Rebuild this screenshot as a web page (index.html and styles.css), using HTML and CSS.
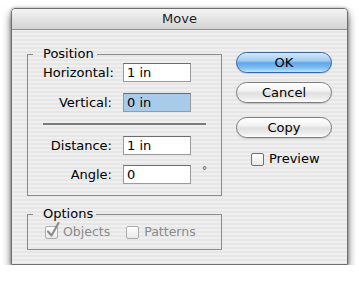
FILE: index.html
```html
<!DOCTYPE html>
<html>
<head>
<meta charset="utf-8">
<link rel="stylesheet" href="styles.css">
</head>
<body>
<div class="window">
  <div class="titlebar">Move</div>
  <div class="content">
    <div class="left">
      <fieldset class="group position">
        <legend>Position</legend>
        <div class="fields first">
          <label class="lbl">Horizontal:</label>
          <input class="field" type="text" value="1 in">
          <span></span>
          <label class="lbl">Vertical:</label>
          <input class="field selected" type="text" value="0 in">
          <span></span>
        </div>
        <hr class="sep">
        <div class="fields second">
          <label class="lbl">Distance:</label>
          <input class="field" type="text" value="1 in">
          <span></span>
          <label class="lbl">Angle:</label>
          <input class="field" type="text" value="0">
          <span class="deg">°</span>
        </div>
      </fieldset>
      <fieldset class="group options">
        <legend>Options</legend>
        <div class="checks">
          <div class="check disabled">
            <span class="box"><svg class="mark" width="14" height="16" viewBox="0 0 14 16"><path d="M2 9.5 L5.5 13.5 L12.5 1" fill="none" stroke="#8d8d8d" stroke-width="2.2" stroke-linecap="round" stroke-linejoin="round"/></svg></span>
            <span>Objects</span>
          </div>
          <div class="check disabled patterns">
            <span class="box"></span>
            <span>Patterns</span>
          </div>
        </div>
      </fieldset>
    </div>
    <div class="right">
      <button class="btn default">OK</button>
      <button class="btn cancel">Cancel</button>
      <button class="btn copy">Copy</button>
      <div class="check preview">
        <span class="box"></span>
        <span>Preview</span>
      </div>
    </div>
  </div>
</div>
</body>
</html>
```
FILE: styles.css
```css
html, body {
  margin: 0;
  padding: 0;
  background: #ffffff;
}
body {
  font-family: "DejaVu Sans", "Liberation Sans", sans-serif;
  font-size: 13px;
  color: #000;
  padding: 8px 0 0 11px;
}
.window {
  width: 337px;
  height: 257px;
  box-sizing: border-box;
  border: 1px solid #6e6e6e;
  border-radius: 4px 4px 0 0;
  background: repeating-linear-gradient(to bottom, #efefef 0, #efefef 2px, #e6e6e6 2px, #e6e6e6 4px);
  box-shadow: 0 5px 9px rgba(0, 0, 0, 0.6), 0 0 3px rgba(0, 0, 0, 0.35);
  overflow: hidden;
}
.titlebar {
  height: 20px;
  line-height: 20px;
  text-align: center;
  color: #222;
  font-size: 13px;
  border-bottom: 1px solid #8e8e8e;
  background: linear-gradient(to bottom, #f4f4f4 0%, #e4e4e4 50%, #d4d4d4 100%);
  border-radius: 3px 3px 0 0;
}
.content {
  display: flex;
  padding: 0 15px;
}
.left {
  width: 195px;
}
.group {
  box-sizing: border-box;
  width: 195px;
  min-width: 0;
  margin: 0;
  border: 1px solid #8a8a8a;
  padding: 1px 15px 11px 15px;
}
.group legend {
  line-height: 16px;
  height: 16px;
  padding: 0 3px 0 10px;
  margin-left: -10px;
  font-size: 13px;
}
.position {
  margin-top: 16px;
}
.options {
  margin-top: 10px;
  padding-top: 2px;
  padding-bottom: 9px;
}
.fields {
  display: grid;
  grid-template-columns: 69px 68px auto;
  column-gap: 11px;
  align-items: center;
}
.fields.first {
  row-gap: 11px;
}
.fields.second {
  row-gap: 10px;
}
.lbl {
  text-align: right;
  white-space: nowrap;
  line-height: 16px;
}
.field {
  box-sizing: border-box;
  width: 68px;
  height: 19px;
  margin: 0;
  border: 1px solid #9a9a9a;
  border-top-color: #6c6c6c;
  padding: 0 3px;
  font-family: "DejaVu Sans", sans-serif;
  font-size: 13px;
  color: #000;
  background: #fff;
  outline: none;
}
.field.selected {
  background: #a9cbea;
}
.deg {
  align-self: start;
  font-size: 10px;
  color: #444;
  line-height: 10px;
  margin-top: 1px;
}
.sep {
  margin: 11px 0;
  border: 0;
  height: 2px;
  background: #7b7b7b;
}
.checks {
  display: flex;
  align-items: center;
  font-size: 12.5px;
}
.check {
  display: flex;
  align-items: center;
  line-height: 16px;
}
.check .box {
  position: relative;
  width: 13px;
  height: 13px;
  box-sizing: border-box;
  border: 1px solid #7a7a7a;
  border-radius: 2px;
  background: linear-gradient(to bottom, #ffffff, #e9e9e9);
  margin-right: 5px;
}
.check.disabled {
  color: #8a8a8a;
}
.check.disabled .box {
  border-color: #acacac;
}
.checks .check:first-child {
  margin-left: 2px;
}
.check.patterns {
  margin-left: 16px;
}
.mark {
  position: absolute;
  left: 0px;
  top: -5px;
}
.right {
  margin-left: auto;
  width: 96px;
  display: flex;
  flex-direction: column;
}
.btn {
  box-sizing: border-box;
  width: 96px;
  height: 21px;
  margin: 0;
  padding: 0;
  border: 1px solid #7c7c7c;
  border-radius: 11px;
  font-family: "DejaVu Sans", sans-serif;
  font-size: 13px;
  color: #000;
  line-height: 18px;
  background: linear-gradient(to bottom, #ffffff 0%, #f3f3f3 40%, #e0e0e0 52%, #ececec 80%, #ffffff 100%);
  box-shadow: 0 1px 1px rgba(0, 0, 0, 0.15);
}
.btn.default {
  margin-top: 22px;
  border-color: #3b62a3;
  background: linear-gradient(to bottom, #d6e9fb 0%, #9fcaf2 42%, #5fa5e6 52%, #82c2f3 80%, #c0e6fc 100%);
}
.btn.cancel {
  margin-top: 9px;
}
.btn.copy {
  margin-top: 14px;
}
.check.preview {
  margin-top: 13px;
  margin-left: 15px;
}
.check.preview .box {
  border-color: #6e6e6e;
}
```
